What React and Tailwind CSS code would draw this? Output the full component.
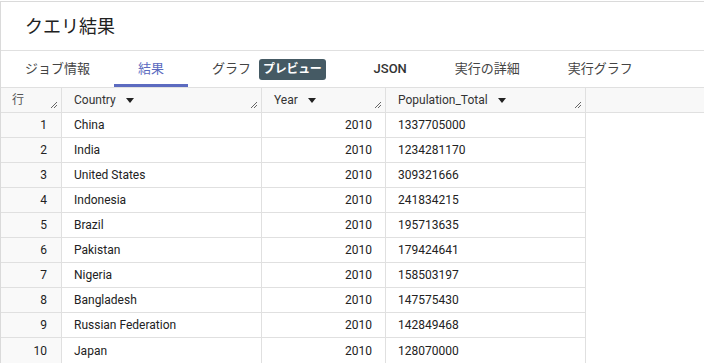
const tabs = ["ジョブ情報", "結果", "グラフ", "JSON", "実行の詳細", "実行グラフ"];

const rows = [
  ["China", "1337705000"],
  ["India", "1234281170"],
  ["United States", "309321666"],
  ["Indonesia", "241834215"],
  ["Brazil", "195713635"],
  ["Pakistan", "179424641"],
  ["Nigeria", "158503197"],
  ["Bangladesh", "147575430"],
  ["Russian Federation", "142849468"],
  ["Japan", "128070000"],
];

function Grip() {
  return (
    <svg className="absolute right-[3px] bottom-[3px]" width="8" height="8" viewBox="0 0 8 8">
      <path d="M1 7 L7 1 M4 7 L7 4" stroke="#666" strokeWidth="1" />
    </svg>
  );
}

function SortArrow() {
  return (
    <svg className="ml-[10px]" width="8" height="5" viewBox="0 0 8 5">
      <path d="M0 0 H8 L4 5 Z" fill="#222" />
    </svg>
  );
}

function HeadCell({ label, width, arrow }) {
  return (
    <div className={`relative flex items-center h-full border-r border-[#e0e0e0] ${width}`}>
      {label === "行" ? (
        <span className="pl-[11px] text-[12px] text-[#555]">行</span>
      ) : (
        <span className="pl-[12px] flex items-center text-[12px] text-[#333]">
          {label}
          {arrow && <SortArrow />}
        </span>
      )}
      <Grip />
    </div>
  );
}

export default function App() {
  return (
    <div
      className="w-[704px] h-[363px] bg-white overflow-hidden pt-px"
      style={{ fontFamily: "Roboto, 'Noto Sans CJK JP', sans-serif" }}
    >
      <div className="border-t border-l border-[#dadada]">
        <div className="h-[49px] flex items-center pl-[24px] text-[18px] text-[#212121] border-b border-[#e0e0e0]">
          クエリ結果
        </div>

        <div className="h-[36px] flex items-stretch">
          {tabs.map((t) => (
            <div
              key={t}
              className={`flex items-center px-6 text-[13px] ${
                t === "結果"
                  ? "text-[#5c6bc0] border-b-[3px] border-[#5c6bc0] pt-[3px]"
                  : t === "JSON"
                  ? "text-[#333] font-medium"
                  : "text-[#444]"
              }`}
            >
              {t}
              {t === "グラフ" && (
                <span className="ml-2 bg-[#455a64] text-white font-bold text-[12px] tracking-[-0.3px] rounded-[3px] px-[4px] h-[21px] flex items-center">
                  プレビュー
                </span>
              )}
            </div>
          ))}
        </div>

        <div className="border-b border-[#e0e0e0]">
          <div className="h-[26px] flex bg-[#f8f8f8] border-t border-b border-[#e0e0e0]">
            <HeadCell label="行" width="w-[61px]" />
            <HeadCell label="Country" width="w-[200px]" arrow />
            <HeadCell label="Year" width="w-[124px]" arrow />
            <HeadCell label="Population_Total" width="w-[200px]" arrow />
          </div>
          {rows.map(([country, pop], i) => (
            <div key={country} className="flex h-[25px] text-[12px] text-[#222]">
              <div className={`w-[61px] flex items-center justify-end pr-[14px] bg-[#f9f9f9] border-r border-[#e0e0e0] ${i < 9 ? "border-b" : ""}`}>
                {i + 1}
              </div>
              <div className={`w-[200px] flex items-center pl-[12px] border-r border-[#e0e0e0] ${i < 9 ? "border-b" : ""}`}>
                {country}
              </div>
              <div className={`w-[124px] flex items-center justify-end pr-[13px] border-r border-[#e0e0e0] ${i < 9 ? "border-b" : ""}`}>
                2010
              </div>
              <div className={`w-[200px] flex items-center pl-[12px] border-r border-[#e0e0e0] ${i < 9 ? "border-b" : ""}`}>
                {pop}
              </div>
            </div>
          ))}
        </div>
      </div>
    </div>
  );
}
